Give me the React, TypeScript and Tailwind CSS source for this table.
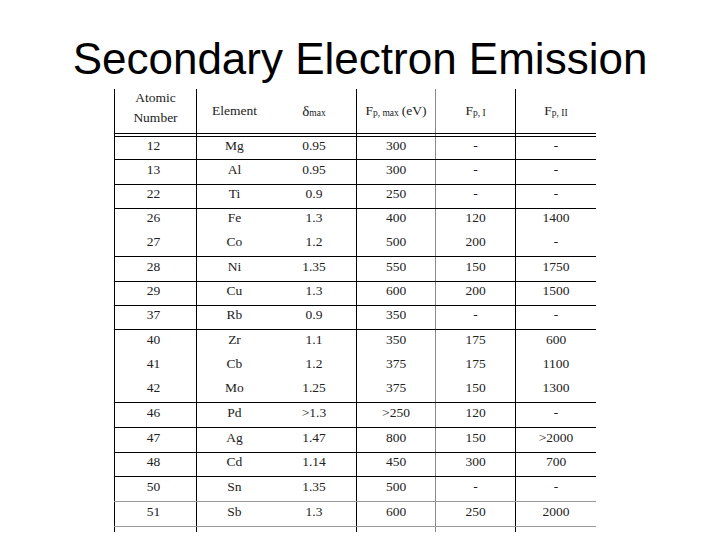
import React from "react";

type Row = {
  z: string;
  el: string;
  d: string;
  fmax: string;
  f1: string;
  f2: string;
  h: string;
  line: string;
};

// line: "" = no rule under the row, otherwise the border classes for it
const rows: Row[] = [
  { z: "12", el: "Mg", d: "0.95", fmax: "300", f1: "-", f2: "-", h: "h-[23px]", line: "border-b border-black" },
  { z: "13", el: "Al", d: "0.95", fmax: "300", f1: "-", f2: "-", h: "h-[25px]", line: "border-b border-black" },
  { z: "22", el: "Ti", d: "0.9", fmax: "250", f1: "-", f2: "-", h: "h-[24px]", line: "border-b border-black" },
  { z: "26", el: "Fe", d: "1.3", fmax: "400", f1: "120", f2: "1400", h: "h-[23px]", line: "" },
  { z: "27", el: "Co", d: "1.2", fmax: "500", f1: "200", f2: "-", h: "h-[25px]", line: "border-b border-black" },
  { z: "28", el: "Ni", d: "1.35", fmax: "550", f1: "150", f2: "1750", h: "h-[25px]", line: "border-b border-black" },
  { z: "29", el: "Cu", d: "1.3", fmax: "600", f1: "200", f2: "1500", h: "h-[24px]", line: "border-b border-black" },
  { z: "37", el: "Rb", d: "0.9", fmax: "350", f1: "-", f2: "-", h: "h-[24px]", line: "border-b border-black" },
  { z: "40", el: "Zr", d: "1.1", fmax: "350", f1: "175", f2: "600", h: "h-[24px]", line: "" },
  { z: "41", el: "Cb", d: "1.2", fmax: "375", f1: "175", f2: "1100", h: "h-[24px]", line: "" },
  { z: "42", el: "Mo", d: "1.25", fmax: "375", f1: "150", f2: "1300", h: "h-[25px]", line: "border-b border-black" },
  { z: "46", el: "Pd", d: ">1.3", fmax: ">250", f1: "120", f2: "-", h: "h-[25px]", line: "border-b border-black" },
  { z: "47", el: "Ag", d: "1.47", fmax: "800", f1: "150", f2: ">2000", h: "h-[25px]", line: "border-b border-black" },
  { z: "48", el: "Cd", d: "1.14", fmax: "450", f1: "300", f2: "700", h: "h-[24px]", line: "border-b border-black" },
  { z: "50", el: "Sn", d: "1.35", fmax: "500", f1: "-", f2: "-", h: "h-[25px]", line: "border-b border-[#9a9a9a]" },
  { z: "51", el: "Sb", d: "1.3", fmax: "600", f1: "250", f2: "2000", h: "h-[25px]", line: "border-b border-[#9a9a9a]" },
];

const c1 = "w-[82px] border-l border-black";
const c2 = "w-[76px] border-l border-black";
const c3 = "w-[84px]";
const c4 = "w-[79px] border-l border-black";
const c5 = "w-[80px] border-l border-[#8a8a8a]";
const c6 = "w-[81px] border-l border-black";

const cell = "flex items-center justify-center";

const App = () => {
  return (
    <div className="w-[720px] h-[540px] bg-white overflow-hidden">
      <h1 className="pt-[37px] text-center text-[44px] leading-[44px] text-black font-['Liberation_Sans',Arial,sans-serif]">
        Secondary Electron Emission
      </h1>

      <div className="mt-[8px] ml-[114px] w-[482px] flex flex-col text-[13.5px] text-[#222] font-['Liberation_Serif','Times_New_Roman',serif]">
        {/* header */}
        <div className="flex h-[45px] border-b border-black">
          <div className={`${c1} ${cell} flex-col pb-[6px] leading-[20px]`}>
            <span>Atomic</span>
            <span>Number</span>
          </div>
          <div className={`${c2} ${cell}`}>Element</div>
          <div className={`${c3} ${cell}`}>
            <span className="text-[15px]">δ</span>
            <sub className="text-[9.5px] relative top-[2px]">max</sub>
          </div>
          <div className={`${c4} ${cell} whitespace-nowrap`}>
            <span>F</span>
            <sub className="text-[9.5px] relative top-[2px]">p, max</sub>
            <span className="ml-[3px]">(eV)</span>
          </div>
          <div className={`${c5} ${cell}`}>
            <span>F</span>
            <sub className="text-[9.5px] relative top-[2px]">p, I</sub>
          </div>
          <div className={`${c6} ${cell}`}>
            <span>F</span>
            <sub className="text-[9.5px] relative top-[2px]">p, II</sub>
          </div>
        </div>

        {/* second rule of the double line */}
        <div className="flex h-[3px] border-b border-black">
          <div className={c1} />
          <div className={c2} />
          <div className={c3} />
          <div className={c4} />
          <div className={c5} />
          <div className={c6} />
        </div>

        {rows.map((r) => (
          <div key={r.z} className={`flex ${r.h} ${r.line}`}>
            <div className={`${c1} ${cell} pr-[4px] pb-[4px]`}>{r.z}</div>
            <div className={`${c2} ${cell} pb-[4px]`}>{r.el}</div>
            <div className={`${c3} ${cell} pb-[4px]`}>{r.d}</div>
            <div className={`${c4} ${cell} pb-[4px]`}>{r.fmax}</div>
            <div className={`${c5} ${cell} pb-[4px]`}>{r.f1}</div>
            <div className={`${c6} ${cell} pb-[4px]`}>{r.f2}</div>
          </div>
        ))}

        {/* vertical rules run a little past the last line */}
        <div className="flex h-[5px]">
          <div className={c1} />
          <div className={c2} />
          <div className={c3} />
          <div className={c4} />
          <div className={c5} />
          <div className={c6} />
        </div>
      </div>
    </div>
  );
};

export default App;
